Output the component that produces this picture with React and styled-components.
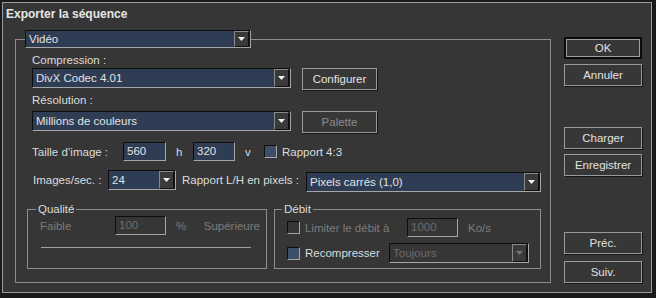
import React from 'react';
import styled, { createGlobalStyle } from 'styled-components';

const GlobalStyle = createGlobalStyle`
  html, body { margin: 0; padding: 0; background: #1a1a1a; }
  body {
    width: 656px; height: 298px; overflow: hidden;
    font-family: "Liberation Sans", Arial, sans-serif;
    font-size: 11.5px; color: #dcdcdc;
  }
  * { box-sizing: border-box; }
`;

const Window = styled.div`
  margin: 2px 0 0 2px;
  width: 650px;
  height: 291px;
  border: 1px solid #9c9c9c;
  background: #363636;
  display: flex;
  flex-direction: column;
`;

const TitleBar = styled.div`
  height: 27px;
  padding: 4px 0 0 3px;
  line-height: 14px;
  font-size: 12px;
  font-weight: bold;
  color: #e6e6e6;
`;

const Body = styled.div`
  display: flex;
  gap: 13px;
  padding: 0 8px 0 12px;
`;

const MainGroup = styled.fieldset`
  margin: 0;
  width: 536px;
  min-width: 0;
  padding: 0 9px 13px 9px;
  border: 1px solid #8e8e8e;
`;

const Legend = styled.legend`
  padding: ${p => (p.$text ? '0 2px' : '0')};
  line-height: 14px;
  color: #dcdcdc;
`;

const Label = styled.div`
  line-height: 14px;
  margin-top: ${p => p.$top || 0}px;
  padding-left: 7px;
`;

const Row = styled.div`
  display: flex;
  align-items: ${p => p.$align || 'center'};
  gap: ${p => p.$gap || 0}px;
  height: ${p => p.$h}px;
  margin-top: ${p => p.$top || 0}px;
  padding-left: ${p => p.$left || 0}px;
`;

const Text = styled.span`
  flex: none;
  width: ${p => (p.$w ? `${p.$w}px` : 'auto')};
  margin-left: ${p => (p.$auto ? 'auto' : `${p.$ml || 0}px`)};
  color: ${p => (p.$dim ? '#7c7c7c' : '#dcdcdc')};
  white-space: nowrap;
`;

const SelectBox = styled.div`
  flex: none;
  display: flex;
  align-items: center;
  width: ${p => p.$w}px;
  height: ${p => p.$h || 20}px;
  margin-left: ${p => (p.$auto ? 'auto' : '0')};
  margin-top: ${p => p.$mt || 0}px;
  border: 1px solid;
  border-color: #0d0d0d #a6a6a6 #a6a6a6 #0d0d0d;
  background: ${p => (p.$off ? '#363636' : '#2e3d54')};
  color: ${p => (p.$off ? '#6c6c6c' : '#e2e2e2')};
`;

const SelectText = styled.span`
  flex: 1;
  padding-left: 3px;
  white-space: nowrap;
  overflow: hidden;
`;

const ArrowBox = styled.span`
  flex: none;
  width: 15px;
  height: 100%;
  display: flex;
  align-items: center;
  justify-content: center;
  background: #3a3a3a;
  border: 1px solid;
  border-color: #8a8a8a #111 #111 #8a8a8a;
  box-shadow: 1px 0 0 #111;
  margin-right: 1px;
`;

const Field = styled.div`
  flex: none;
  width: ${p => p.$w}px;
  height: 19px;
  line-height: 17px;
  padding-left: 3px;
  border: 1px solid;
  border-color: #0d0d0d #a6a6a6 #a6a6a6 #0d0d0d;
  background: ${p => (p.$off ? '#363636' : '#2e3d54')};
  color: ${p => (p.$off ? '#6c6c6c' : '#e2e2e2')};
`;

const Check = styled.span`
  flex: none;
  width: 13px;
  height: 13px;
  border: 1px solid;
  border-color: #0d0d0d #a6a6a6 #a6a6a6 #0d0d0d;
  background: ${p => (p.$on ? '#3d4e68' : 'transparent')};
`;

const Button = styled.div`
  flex: none;
  width: ${p => p.$w || 78}px;
  height: 22px;
  margin-top: ${p => p.$top || 0}px;
  display: flex;
  align-items: center;
  justify-content: center;
  background: #373737;
  color: ${p => (p.$off ? '#8c8c8c' : '#e2e2e2')};
  border: ${p => (p.$def ? '2px solid #0b0b0b' : '1px solid #9a9a9a')};
  box-shadow: ${p => (p.$def ? 'inset 0 0 0 1px #a0a0a0' : '1px 1px 0 #141414')};
`;

const Groups = styled.div`
  display: flex;
  gap: 7px;
  margin-top: 11px;
  padding-left: 2px;
`;

const SubGroup = styled.fieldset`
  margin: 0;
  min-width: 0;
  width: ${p => p.$w}px;
  padding: 0 ${p => p.$pr}px ${p => p.$pb}px ${p => p.$pl}px;
  border: 1px solid #8e8e8e;
`;

const Track = styled.div`
  height: 1px;
  margin: 12px 9px 0 5px;
  background: #a0a0a0;
`;

const ButtonColumn = styled.div`
  display: flex;
  flex-direction: column;
  padding-top: 7px;
`;

function Arrow({ off }) {
  return (
    <ArrowBox>
      <svg width="7" height="4" viewBox="0 0 7 4">
        <path d="M0 0 H7 L3.5 4 Z" fill={off ? '#777' : '#f0f0f0'} />
      </svg>
    </ArrowBox>
  );
}

function Select({ w, h, value, off, auto, mt }) {
  return (
    <SelectBox $w={w} $h={h} $off={off} $auto={auto} $mt={mt}>
      <SelectText>{value}</SelectText>
      <Arrow off={off} />
    </SelectBox>
  );
}

export default function App() {
  return (
    <>
      <GlobalStyle />
      <Window>
        <TitleBar>Exporter la séquence</TitleBar>
        <Body>
          <MainGroup>
            <Legend>
              <Select w={226} h={18} value="Vidéo" />
            </Legend>

            <Label $top={5}>Compression :</Label>
            <Row $h={22} $top={1} $left={7} $gap={11} $align="flex-start">
              <Select w={259} value="DivX Codec 4.01" />
              <Button $w={75}>Configurer</Button>
            </Row>

            <Label $top={3}>Résolution :</Label>
            <Row $h={22} $top={4} $left={7} $gap={11} $align="flex-start">
              <Select w={259} value="Millions de couleurs" />
              <Button $w={75} $off>Palette</Button>
            </Row>

            <Row $h={19} $top={9} $left={7}>
              <Text $w={91}>Taille d’image :</Text>
              <Field $w={43}>560</Field>
              <Text $ml={10} $w={17}>h</Text>
              <Field $w={42}>320</Field>
              <Text $ml={10} $w={19}>v</Text>
              <Check $on />
              <Text $ml={5}>Rapport 4:3</Text>
            </Row>

            <Row $h={22} $top={8} $left={8}>
              <Text $w={75}>Images/sec. :</Text>
              <Select w={68} value="24" />
              <Text $ml={6}>Rapport L/H en pixels :</Text>
              <Select w={235} value="Pixels carrés (1,0)" auto mt={4} />
            </Row>

            <Groups>
              <SubGroup $w={240} $pl={8} $pr={6} $pb={20}>
                <Legend $text>Qualité</Legend>
                <Row $h={19} $left={4}>
                  <Text $w={75} $dim>Faible</Text>
                  <Field $w={51} $off>100</Field>
                  <Text $ml={10} $dim>%</Text>
                  <Text $auto $dim>Supérieure</Text>
                </Row>
                <Track />
              </SubGroup>

              <SubGroup $w={267} $pl={7} $pr={10} $pb={4}>
                <Legend $text>Débit</Legend>
                <Row $h={19} $top={2} $left={5}>
                  <Check />
                  <Text $ml={5} $w={102} $dim>Limiter le débit à</Text>
                  <Field $w={51} $off>1000</Field>
                  <Text $ml={10} $dim>Ko/s</Text>
                </Row>
                <Row $h={20} $top={6} $left={5}>
                  <Check $on />
                  <Text $ml={5} $w={84}>Recompresser</Text>
                  <Select w={140} value="Toujours" off />
                </Row>
              </SubGroup>
            </Groups>
          </MainGroup>

          <ButtonColumn>
            <Button $def>OK</Button>
            <Button $top={5}>Annuler</Button>
            <Button $top={41}>Charger</Button>
            <Button $top={5}>Enregistrer</Button>
            <Button $top={56}>Préc.</Button>
            <Button $top={7}>Suiv.</Button>
          </ButtonColumn>
        </Body>
      </Window>
    </>
  );
}
